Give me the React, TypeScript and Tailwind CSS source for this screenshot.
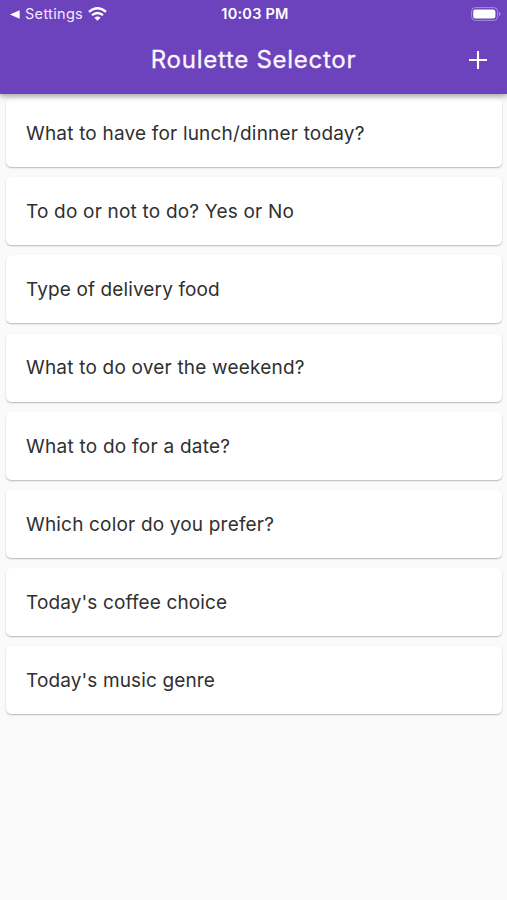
const items = [
  { text: "What to have for lunch/dinner today?", tracking: "tracking-[0.19px]" },
  { text: "To do or not to do? Yes or No", tracking: "tracking-[0.2px]" },
  { text: "Type of delivery food", tracking: "tracking-[0.12px]" },
  { text: "What to do over the weekend?", tracking: "tracking-[0.2px]" },
  { text: "What to do for a date?", tracking: "tracking-[0.25px]" },
  { text: "Which color do you prefer?", tracking: "tracking-[0.18px]" },
  { text: "Today's coffee choice", tracking: "tracking-[0.13px]" },
  { text: "Today's music genre", tracking: "tracking-[0.13px]" },
];

export default function App() {
  return (
    <div className="flex h-[900px] w-[507px] flex-col bg-[#fafafa] font-['Inter',sans-serif] text-[#303030]">
      <header className="relative z-10 h-[94px] bg-[#6d42bd] text-white shadow-[0_2px_6px_rgba(0,0,0,0.38)]">
        <div className="grid h-7 grid-cols-3 items-center pr-[6px] pl-[9px]">
          <div className="flex items-center">
            <svg className="h-[9px] w-[11px]" viewBox="0 0 11 9"><path d="M1 4.5 10.6.2v8.6z" fill="white" /></svg>
            <span className="ml-[5px] text-[14.5px] leading-7 tracking-[0.32px] text-[#f1e9ff]">Settings</span>
            <svg className="ml-[5px] h-[14px] w-[19px]" viewBox="0 0 19 14" fill="none" stroke="white" strokeWidth="2.4">
              <path d="M1 4.9Q9.5-2.3 18 4.9M4 8.2q5.5-4.6 11 0" />
              <path d="m6.4 10.7 3.1 3.1 3.1-3.1q-3.1-2.6-6.2 0z" fill="white" stroke="none" />
            </svg>
          </div>
          <span className="text-center text-[14.5px] font-semibold leading-7 tracking-[0.25px]">10:03 PM</span>
          <svg className="h-[14px] w-[30px] justify-self-end" viewBox="0 0 30 14">
            <rect x=".6" y=".6" width="26" height="12.8" rx="3.8" fill="none" stroke="white" strokeOpacity=".4" />
            <rect x="2.2" y="2.5" width="22.2" height="9" rx="2.3" fill="white" />
            <path d="M28 4.8q3 2.2 0 4.4z" fill="white" opacity=".45" />
          </svg>
        </div>
        <div className="grid h-[64px] grid-cols-[80px_1fr_80px] items-center">
          <h1 className="col-start-2 text-center text-[24px] tracking-[0.73px] text-[#fbf6ff] [-webkit-text-stroke:0.3px_#fbf6ff]">Roulette Selector</h1>
          <button aria-label="Add" className="mr-5 justify-self-end">
            <svg className="size-[18px]" viewBox="0 0 18 18" stroke="white" strokeWidth="2.1"><path d="M0 9h18M9 0v18" /></svg>
          </button>
        </div>
      </header>
      <main className="flex flex-col gap-[10.2px] pt-[5px] pr-[5px] pl-[6px]">
        {items.map((item) => (
          <div key={item.text} className="flex h-[68px] items-center rounded-[5px] bg-white pt-0.5 pl-5 shadow-[0_1px_2px_rgba(0,0,0,0.18),0_1px_1px_rgba(0,0,0,0.1)]">
            <span className={`text-[19px] ${item.tracking}`}>{item.text}</span>
          </div>
        ))}
      </main>
    </div>
  );
}
